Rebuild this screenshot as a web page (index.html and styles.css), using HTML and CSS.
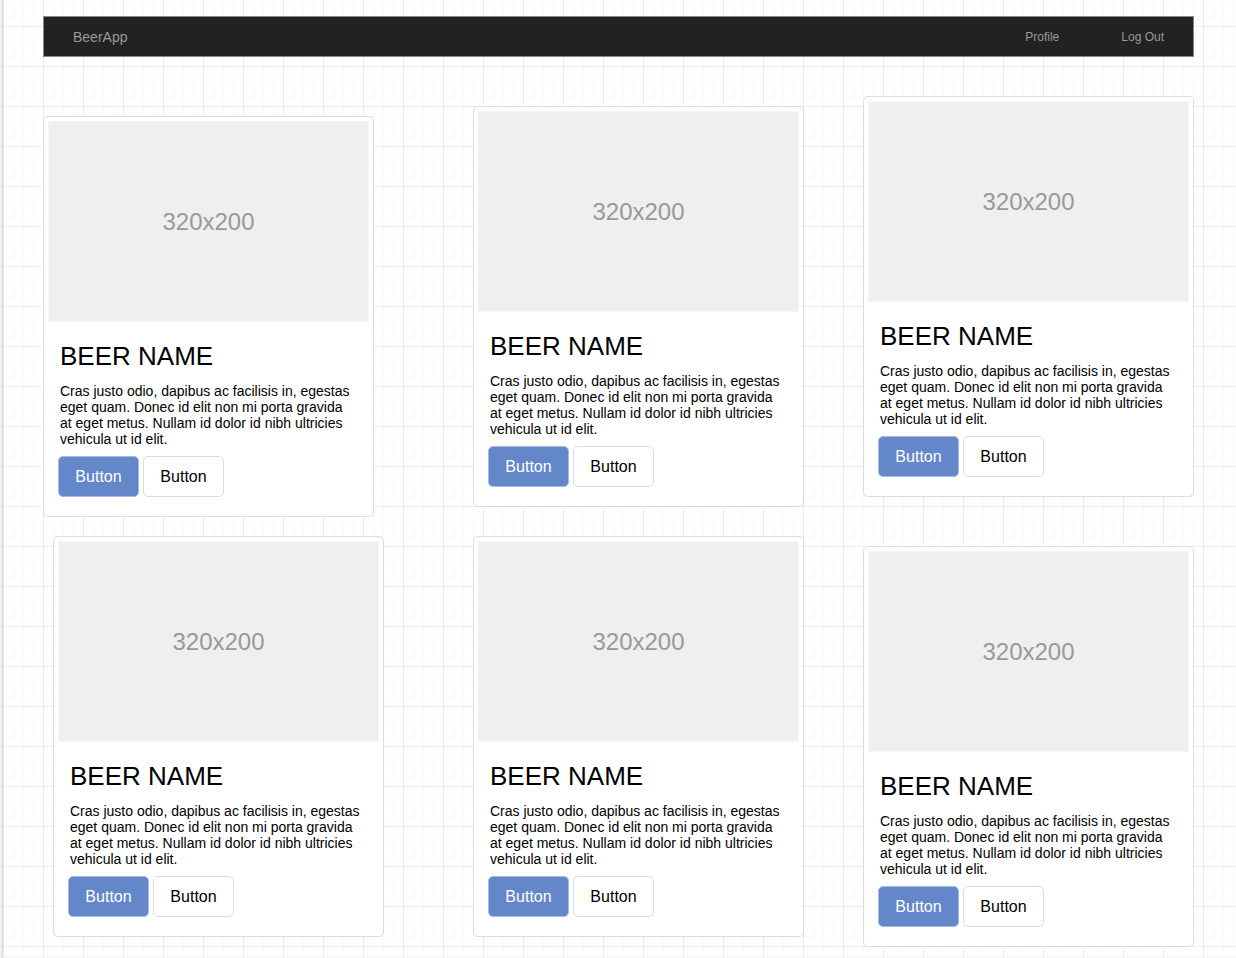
FILE: index.html
```html
<!DOCTYPE html>
<html lang="en">
<head>
<meta charset="utf-8">
<title>BeerApp</title>
<link rel="stylesheet" href="styles.css">
</head>
<body>
<div class="canvas">
  <header class="navbar">
    <a class="brand" href="#">BeerApp</a>
    <nav class="links">
      <a href="#">Profile</a>
      <a href="#">Log Out</a>
    </nav>
  </header>
  <main class="board">
    <div class="column column-first">
      <article class="card">
        <div class="thumb">320x200</div>
        <div class="caption">
          <h2>BEER NAME</h2>
          <p>Cras justo odio, dapibus ac facilisis in, egestas eget quam. Donec id elit non mi porta gravida at eget metus. Nullam id dolor id nibh ultricies vehicula ut id elit.</p>
        </div>
        <div class="actions"><button class="btn btn-primary" type="button">Button</button><button class="btn" type="button">Button</button></div>
      </article>
      <article class="card card-indented">
        <div class="thumb">320x200</div>
        <div class="caption">
          <h2>BEER NAME</h2>
          <p>Cras justo odio, dapibus ac facilisis in, egestas eget quam. Donec id elit non mi porta gravida at eget metus. Nullam id dolor id nibh ultricies vehicula ut id elit.</p>
        </div>
        <div class="actions"><button class="btn btn-primary" type="button">Button</button><button class="btn" type="button">Button</button></div>
      </article>
    </div>
    <div class="column column-second">
      <article class="card">
        <div class="thumb">320x200</div>
        <div class="caption">
          <h2>BEER NAME</h2>
          <p>Cras justo odio, dapibus ac facilisis in, egestas eget quam. Donec id elit non mi porta gravida at eget metus. Nullam id dolor id nibh ultricies vehicula ut id elit.</p>
        </div>
        <div class="actions"><button class="btn btn-primary" type="button">Button</button><button class="btn" type="button">Button</button></div>
      </article>
      <article class="card">
        <div class="thumb">320x200</div>
        <div class="caption">
          <h2>BEER NAME</h2>
          <p>Cras justo odio, dapibus ac facilisis in, egestas eget quam. Donec id elit non mi porta gravida at eget metus. Nullam id dolor id nibh ultricies vehicula ut id elit.</p>
        </div>
        <div class="actions"><button class="btn btn-primary" type="button">Button</button><button class="btn" type="button">Button</button></div>
      </article>
    </div>
    <div class="column column-third">
      <article class="card">
        <div class="thumb">320x200</div>
        <div class="caption">
          <h2>BEER NAME</h2>
          <p>Cras justo odio, dapibus ac facilisis in, egestas eget quam. Donec id elit non mi porta gravida at eget metus. Nullam id dolor id nibh ultricies vehicula ut id elit.</p>
        </div>
        <div class="actions"><button class="btn btn-primary" type="button">Button</button><button class="btn" type="button">Button</button></div>
      </article>
      <article class="card">
        <div class="thumb">320x200</div>
        <div class="caption">
          <h2>BEER NAME</h2>
          <p>Cras justo odio, dapibus ac facilisis in, egestas eget quam. Donec id elit non mi porta gravida at eget metus. Nullam id dolor id nibh ultricies vehicula ut id elit.</p>
        </div>
        <div class="actions"><button class="btn btn-primary" type="button">Button</button><button class="btn" type="button">Button</button></div>
      </article>
    </div>
  </main>
</div>
</body>
</html>
```
FILE: styles.css
```css
* {
  box-sizing: border-box;
}

body {
  margin: 0;
  background: #f0f0f0;
  color: #000;
  font-family: "Liberation Sans", Arial, sans-serif;
}

/* Graph paper: 40px major squares over 10px minor squares */
.canvas {
  min-height: 100vh;
  margin-left: 2px;
  padding: 16px 42px 10px 40px;
  border-left: 1px solid #dadada;
  border-bottom: 1px solid #f6f6f6;
  background-color: #fff;
  background-image:
    linear-gradient(to right, #ebebeb 1px, transparent 1px),
    linear-gradient(to bottom, #ebebeb 1px, transparent 1px),
    linear-gradient(to right, #f9f9f9 1px, transparent 1px),
    linear-gradient(to bottom, #f9f9f9 1px, transparent 1px);
  background-size: 40px 40px, 40px 40px, 10px 10px, 10px 10px;
  background-position: 0 26px, 0 26px, 0 6px, 0 6px;
}

.navbar {
  display: flex;
  align-items: center;
  justify-content: space-between;
  height: 41px;
  padding: 0 29px;
  border: 1px solid #888;
  background: #222;
}

.navbar a {
  color: #999;
  text-decoration: none;
}

.brand {
  font-size: 14px;
}

.links {
  display: flex;
  gap: 62px;
  font-size: 12px;
}

.board {
  display: grid;
  grid-template-columns: 430fr 390fr 331px;
  align-items: start;
  padding-top: 39px;
}

.column {
  display: flex;
  flex-direction: column;
}

.column-first {
  gap: 19px;
  padding-top: 20px;
}

.column-second {
  gap: 29px;
  padding-top: 10px;
}

.column-third {
  gap: 49px;
}

.card {
  width: 331px;
  padding: 4px 4px 19px;
  border: 1px solid #ddd;
  border-radius: 5px;
  background: #fff;
}

.card-indented {
  margin-left: 10px;
}

.thumb {
  display: flex;
  align-items: center;
  justify-content: center;
  height: 201px;
  border: 1px solid #f6f6f6;
  background: #efefef;
  color: #999;
  font-size: 24px;
}

.caption {
  padding: 19px 12px 0;
}

.caption h2 {
  margin: 0 0 12px;
  font-size: 26px;
  font-weight: 400;
  line-height: 30px;
}

.caption p {
  margin: 0;
  font-size: 14px;
  line-height: 16px;
}

.actions {
  display: flex;
  gap: 4px;
  padding: 9px 10px 0;
}

.btn {
  width: 81px;
  height: 41px;
  padding: 0;
  border: 1px solid #ddd;
  border-radius: 5px;
  background: #fff;
  color: #000;
  font: inherit;
  font-size: 16px;
}

.btn-primary {
  border-color: #a5bbe3;
  background: #6487ca;
  color: #fff;
}
```
